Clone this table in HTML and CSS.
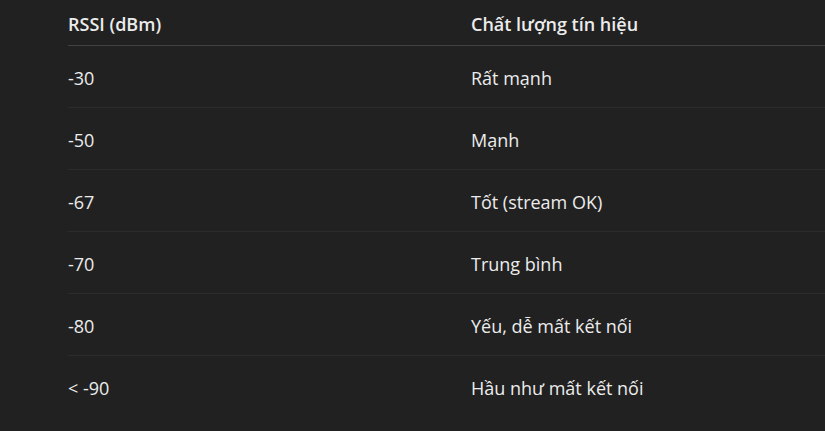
FILE: index.html
```html
<!DOCTYPE html>
<html lang="vi">
<head>
<meta charset="utf-8">
<link rel="stylesheet" href="styles.css">
</head>
<body>
<div class="wrap">
<table class="tbl">
<thead>
<tr><th class="c1">RSSI (dBm)</th><th>Chất lượng tín hiệu</th></tr>
</thead>
<tbody>
<tr><td>-30</td><td>Rất mạnh</td></tr>
<tr><td>-50</td><td>Mạnh</td></tr>
<tr><td>-67</td><td>Tốt (stream OK)</td></tr>
<tr><td>-70</td><td>Trung bình</td></tr>
<tr><td>-80</td><td>Yếu, dễ mất kết nối</td></tr>
<tr><td>&lt; -90</td><td>Hầu như mất kết nối</td></tr>
</tbody>
</table>
</div>
</body>
</html>
```
FILE: styles.css
```css
html, body {
  margin: 0;
  padding: 0;
  background: #212121;
}
.wrap {
  padding-left: 68px;
}
.tbl {
  border-collapse: collapse;
  width: 757px;
  font-family: "Open Sans", "Noto Sans", sans-serif;
  font-size: 18px;
  color: #ececec;
  table-layout: fixed;
}
.tbl th, .tbl td {
  text-align: left;
  padding: 0;
  box-sizing: border-box;
}
.tbl .c1 {
  width: 403px;
}
.tbl th {
  font-weight: 600;
  height: 45px;
  line-height: 24px;
  padding-top: 3px;
  border-bottom: 1px solid #424242;
}
.tbl td {
  height: 62px;
  line-height: 24px;
  padding-top: 3px;
  border-bottom: 1px solid #2c2c2c;
}
.tbl tbody tr:last-child td {
  border-bottom: none;
}
```
